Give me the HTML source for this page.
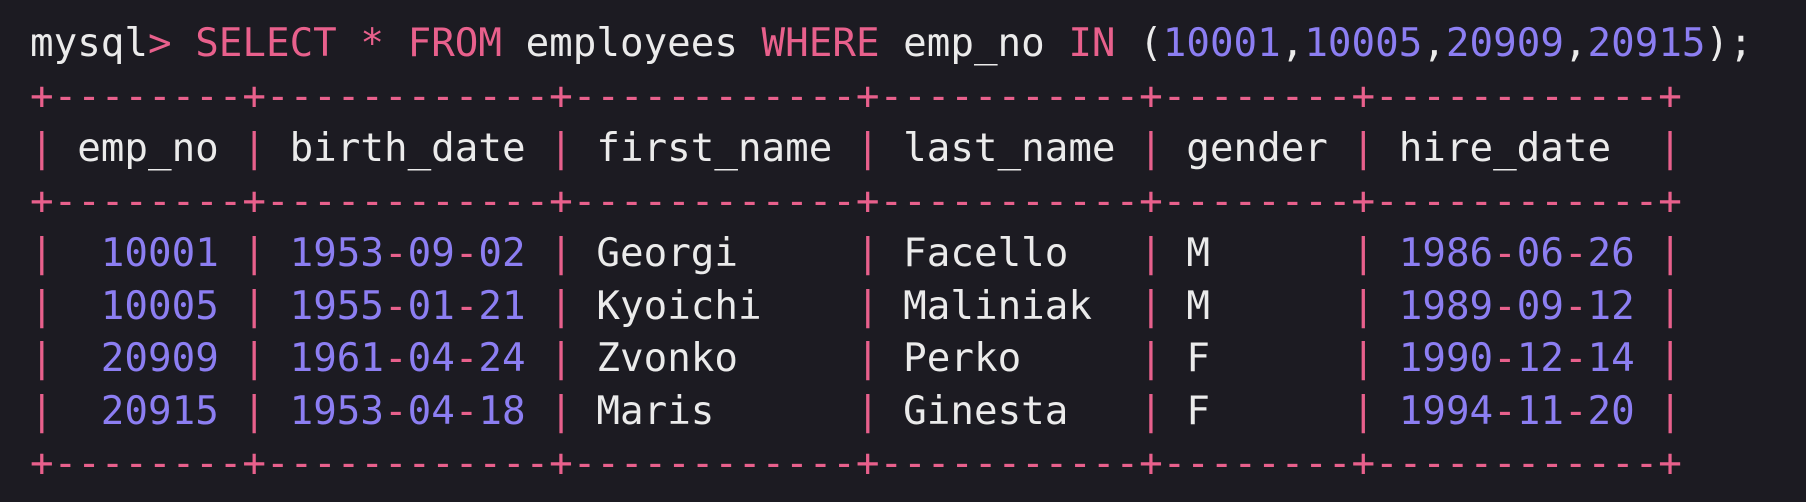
<!DOCTYPE html>
<html><head><style>
html,body{margin:0;padding:0;background:#1c1b22;width:1806px;height:502px;overflow:hidden}
pre{position:absolute;left:30px;top:18px;margin:0;font-family:"DejaVu Sans Mono","Liberation Mono",monospace;font-size:39px;line-height:52.5px;color:#ebebeb;white-space:pre;transform:scaleX(1.005);transform-origin:0 0}
.p{color:#e8608c}.n{color:#8c7ef2}
</style></head><body>
<pre>mysql<span class="p">&gt;</span> <span class="p">SELECT</span> <span class="p">*</span> <span class="p">FROM</span> employees <span class="p">WHERE</span> emp_no <span class="p">IN</span> (<span class="n">10001</span>,<span class="n">10005</span>,<span class="n">20909</span>,<span class="n">20915</span>);
<span class="p">+--------+------------+------------+-----------+--------+------------+</span>
<span class="p">|</span> emp_no <span class="p">|</span> birth_date <span class="p">|</span> first_name <span class="p">|</span> last_name <span class="p">|</span> gender <span class="p">|</span> hire_date  <span class="p">|</span>
<span class="p">+--------+------------+------------+-----------+--------+------------+</span>
<span class="p">|</span>  <span class="n">10001</span> <span class="p">|</span> <span class="n">1953</span><span class="p">-</span><span class="n">09</span><span class="p">-</span><span class="n">02</span> <span class="p">|</span> Georgi     <span class="p">|</span> Facello   <span class="p">|</span> M      <span class="p">|</span> <span class="n">1986</span><span class="p">-</span><span class="n">06</span><span class="p">-</span><span class="n">26</span> <span class="p">|</span>
<span class="p">|</span>  <span class="n">10005</span> <span class="p">|</span> <span class="n">1955</span><span class="p">-</span><span class="n">01</span><span class="p">-</span><span class="n">21</span> <span class="p">|</span> Kyoichi    <span class="p">|</span> Maliniak  <span class="p">|</span> M      <span class="p">|</span> <span class="n">1989</span><span class="p">-</span><span class="n">09</span><span class="p">-</span><span class="n">12</span> <span class="p">|</span>
<span class="p">|</span>  <span class="n">20909</span> <span class="p">|</span> <span class="n">1961</span><span class="p">-</span><span class="n">04</span><span class="p">-</span><span class="n">24</span> <span class="p">|</span> Zvonko     <span class="p">|</span> Perko     <span class="p">|</span> F      <span class="p">|</span> <span class="n">1990</span><span class="p">-</span><span class="n">12</span><span class="p">-</span><span class="n">14</span> <span class="p">|</span>
<span class="p">|</span>  <span class="n">20915</span> <span class="p">|</span> <span class="n">1953</span><span class="p">-</span><span class="n">04</span><span class="p">-</span><span class="n">18</span> <span class="p">|</span> Maris      <span class="p">|</span> Ginesta   <span class="p">|</span> F      <span class="p">|</span> <span class="n">1994</span><span class="p">-</span><span class="n">11</span><span class="p">-</span><span class="n">20</span> <span class="p">|</span>
<span class="p">+--------+------------+------------+-----------+--------+------------+</span></pre>
</body></html>
